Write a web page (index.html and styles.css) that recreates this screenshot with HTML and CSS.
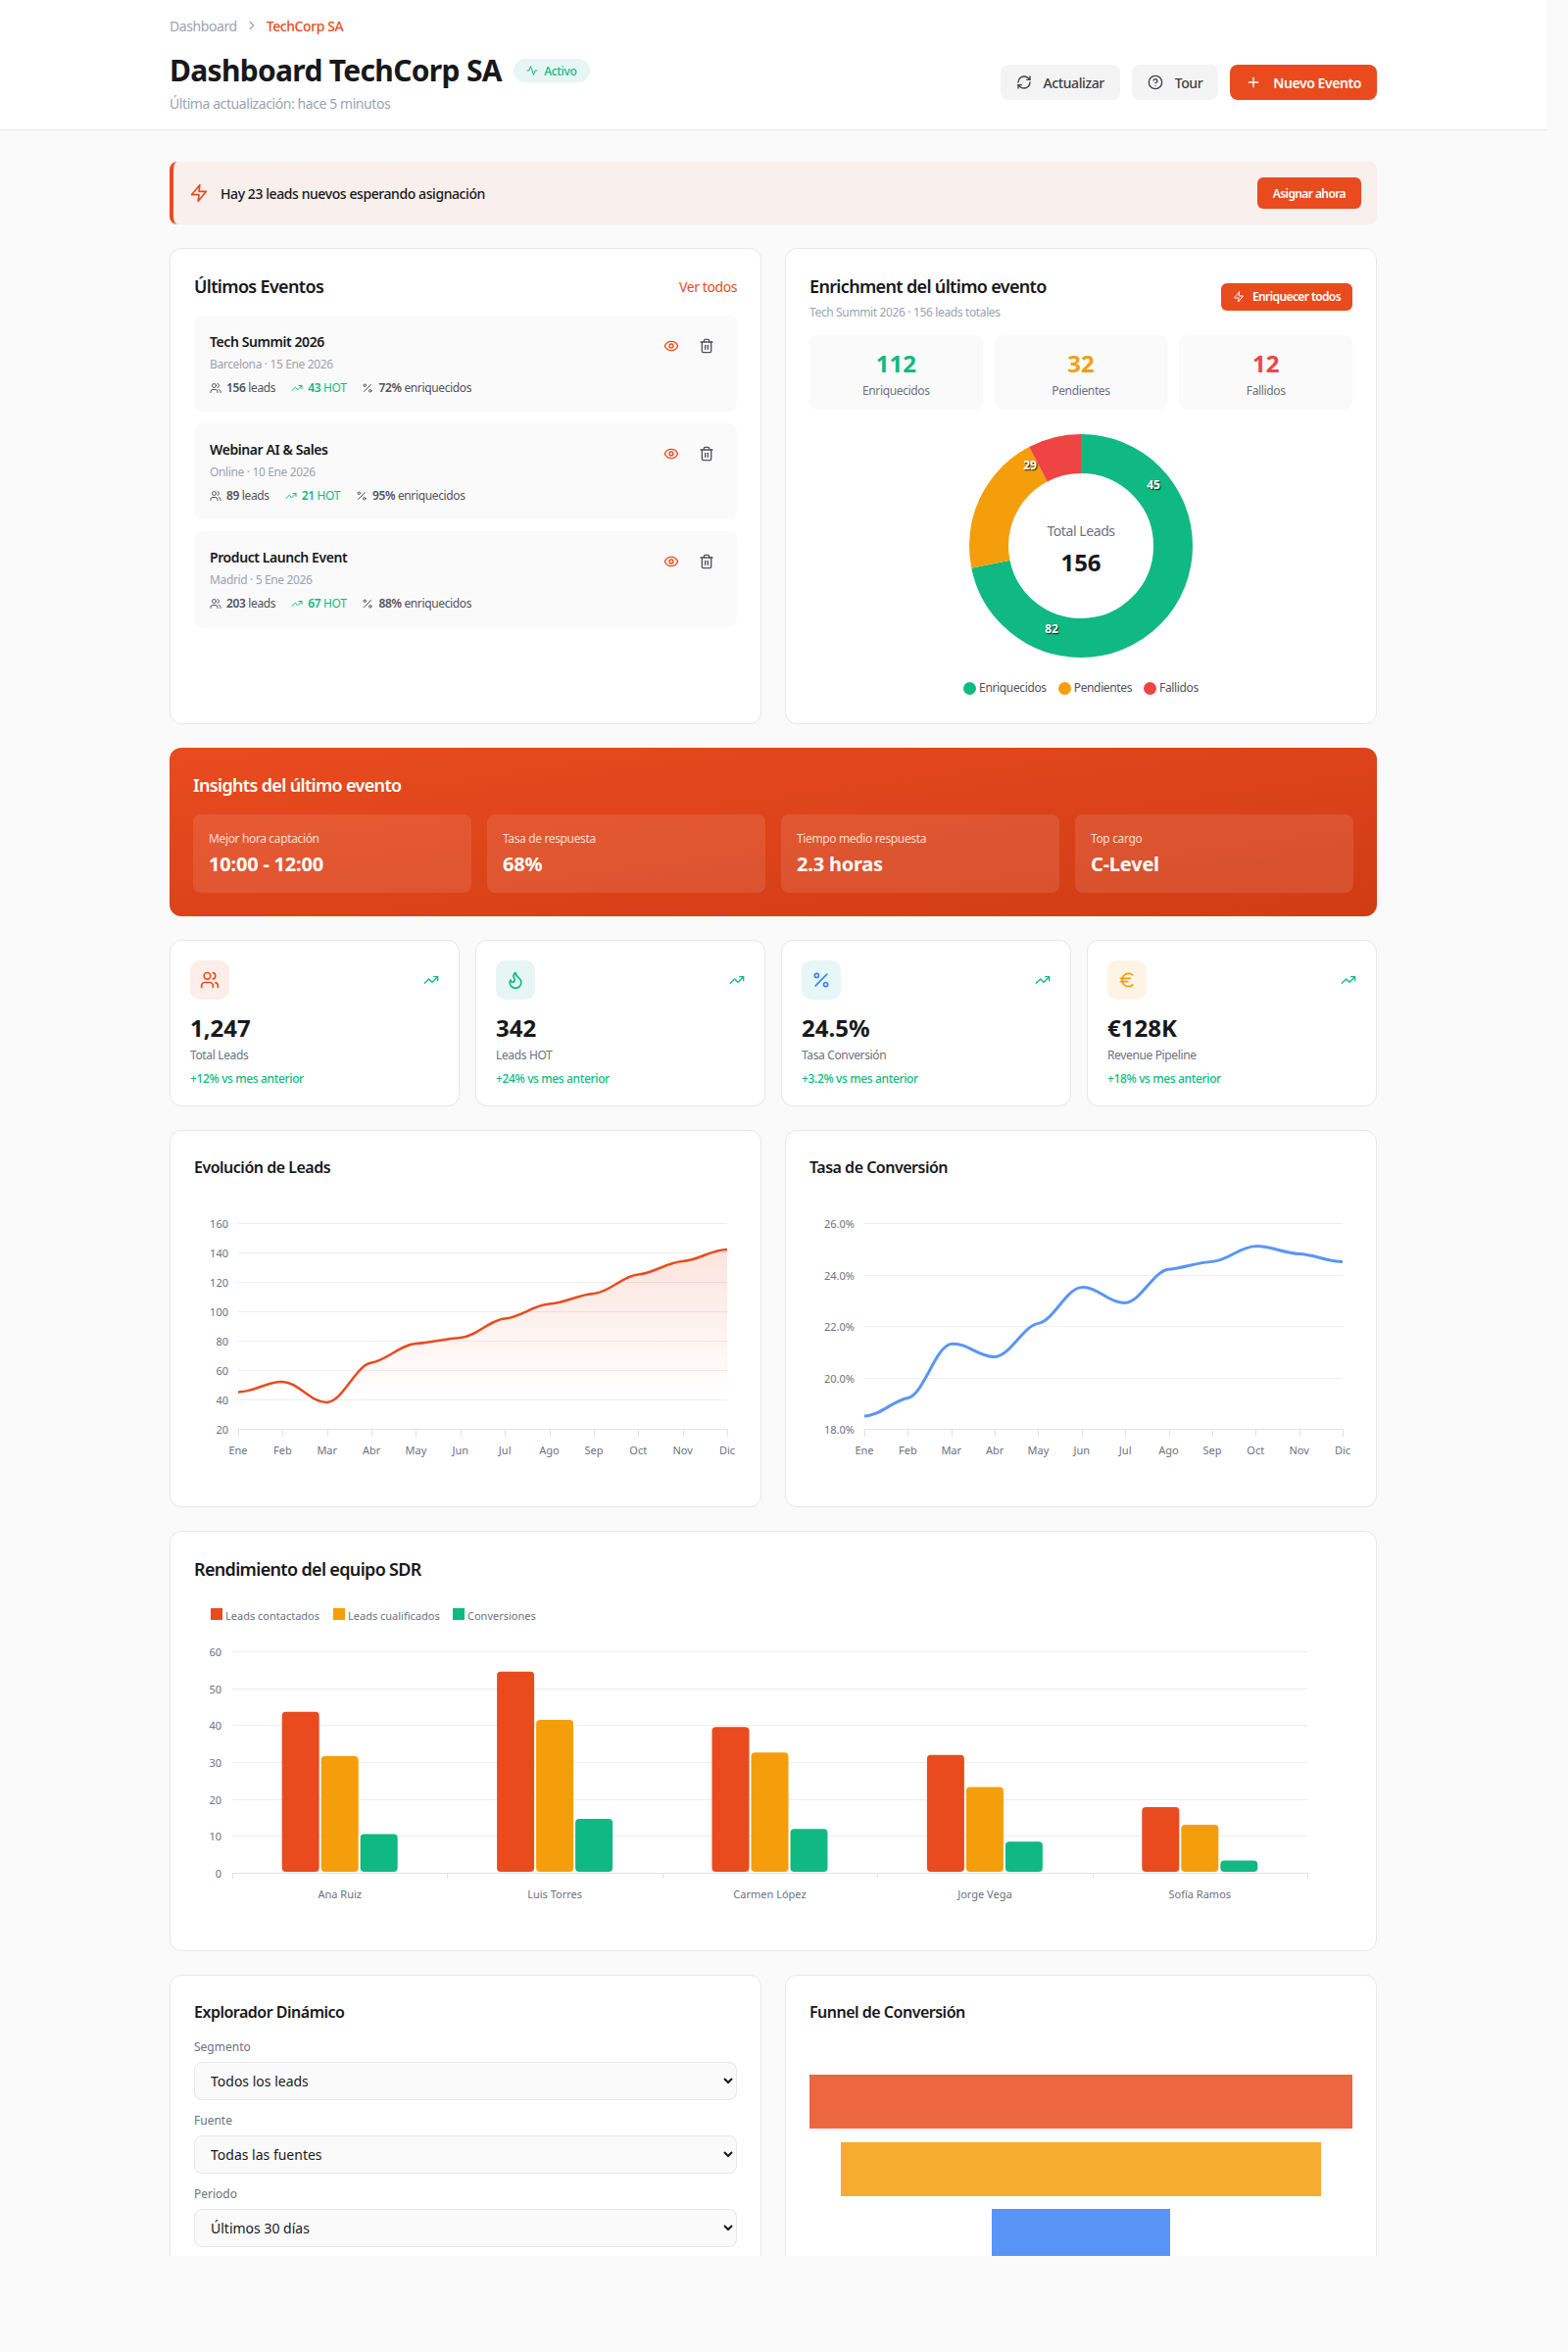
FILE: index.html
```html
<!DOCTYPE html>
<html lang="es">
<head>
  <meta charset="UTF-8" />
  <meta name="viewport" content="width=device-width, initial-scale=1.0"/>
  <title>Dashboard TechCorp SA</title>
  <link rel="stylesheet" href="styles.css">
</head>
<body>
  <svg class="icon-defs" xmlns="http://www.w3.org/2000/svg">
    <symbol id="i-users" viewBox="0 0 24 24"><path d="M16 21v-2a4 4 0 0 0-4-4H6a4 4 0 0 0-4 4v2"/><circle cx="9" cy="7" r="4"/><path d="M22 21v-2a4 4 0 0 0-3-3.87"/><path d="M16 3.13a4 4 0 0 1 0 7.75"/></symbol>
    <symbol id="i-trend" viewBox="0 0 24 24"><polyline points="22 7 13.5 15.5 8.5 10.5 2 17"/><polyline points="16 7 22 7 22 13"/></symbol>
    <symbol id="i-percent" viewBox="0 0 24 24"><line x1="19" x2="5" y1="5" y2="19"/><circle cx="6.5" cy="6.5" r="2.5"/><circle cx="17.5" cy="17.5" r="2.5"/></symbol>
    <symbol id="i-flame" viewBox="0 0 24 24"><path d="M8.5 14.5A2.5 2.5 0 0 0 11 12c0-1.38-.5-2-1-3-1.072-2.143-.224-4.054 2-6 .5 2.5 2 4.9 4 6.5 2 1.6 3 3.5 3 5.5a7 7 0 1 1-14 0c0-1.153.433-2.294 1-3a2.5 2.5 0 0 0 2.5 2.5z"/></symbol>
    <symbol id="i-euro" viewBox="0 0 24 24"><path d="M4 10h12"/><path d="M4 14h9"/><path d="M19 6a7.7 7.7 0 0 0-5.2-2A7.9 7.9 0 0 0 6 12c0 4.4 3.5 8 7.8 8 2 0 3.8-.8 5.2-2"/></symbol>
    <symbol id="i-eye" viewBox="0 0 24 24"><path d="M2 12s3-7 10-7 10 7 10 7-3 7-10 7-10-7-10-7Z"/><circle cx="12" cy="12" r="3"/></symbol>
    <symbol id="i-trash" viewBox="0 0 24 24"><path d="M3 6h18"/><path d="M19 6v14c0 1-1 2-2 2H7c-1 0-2-1-2-2V6"/><path d="M8 6V4c0-1 1-2 2-2h4c1 0 2 1 2 2v2"/><line x1="10" x2="10" y1="11" y2="17"/><line x1="14" x2="14" y1="11" y2="17"/></symbol>
    <symbol id="i-refresh" viewBox="0 0 24 24"><path d="M3 12a9 9 0 0 1 9-9 9.75 9.75 0 0 1 6.74 2.74L21 8"/><path d="M21 3v5h-5"/><path d="M21 12a9 9 0 0 1-9 9 9.75 9.75 0 0 1-6.74-2.74L3 16"/><path d="M8 16H3v5"/></symbol>
    <symbol id="i-help" viewBox="0 0 24 24"><circle cx="12" cy="12" r="10"/><path d="M9.09 9a3 3 0 0 1 5.83 1c0 2-3 3-3 3"/><path d="M12 17h.01"/></symbol>
    <symbol id="i-plus" viewBox="0 0 24 24"><path d="M5 12h14"/><path d="M12 5v14"/></symbol>
    <symbol id="i-zap" viewBox="0 0 24 24"><polygon points="13 2 3 14 12 14 11 22 21 10 12 10 13 2"/></symbol>
    <symbol id="i-activity" viewBox="0 0 24 24"><polyline points="22 12 18 12 15 21 9 3 6 12 2 12"/></symbol>
    <symbol id="i-chevron" viewBox="0 0 24 24"><path d="m9 18 6-6-6-6"/></symbol>
  </svg>

  <div class="viewport">
    <header class="page-header">
      <div class="header-inner">
        <nav class="breadcrumb">
          <span>Dashboard</span>
          <svg class="icon icon-14"><use href="#i-chevron"/></svg>
          <span class="breadcrumb-current">TechCorp SA</span>
        </nav>
        <div class="header-row">
          <div>
            <div class="title-row">
              <h1>Dashboard TechCorp SA</h1>
              <span class="badge"><svg class="icon icon-12"><use href="#i-activity"/></svg>Activo</span>
            </div>
            <p class="updated">Última actualización: hace 5 minutos</p>
          </div>
          <div class="header-actions">
            <button class="btn btn-soft"><svg class="icon icon-16"><use href="#i-refresh"/></svg>Actualizar</button>
            <button class="btn btn-soft"><svg class="icon icon-16"><use href="#i-help"/></svg>Tour</button>
            <button class="btn btn-primary"><svg class="icon icon-16"><use href="#i-plus"/></svg>Nuevo Evento</button>
          </div>
        </div>
      </div>
    </header>

    <main class="content">
      <div class="alert">
        <div class="alert-text"><svg class="icon icon-20 c-brand"><use href="#i-zap"/></svg>Hay 23 leads nuevos esperando asignación</div>
        <button class="btn-small">Asignar ahora</button>
      </div>

      <section class="grid-2">
        <div class="card">
          <div class="card-head">
            <h2>Últimos Eventos</h2>
            <a class="link">Ver todos</a>
          </div>
          <div class="event">
            <div>
              <h3>Tech Summit 2026</h3>
              <p class="event-place">Barcelona · 15 Ene 2026</p>
              <div class="event-stats">
                <span><svg class="icon icon-12"><use href="#i-users"/></svg><b>156</b> leads</span>
                <span class="c-green"><svg class="icon icon-12"><use href="#i-trend"/></svg><b>43</b> HOT</span>
                <span><svg class="icon icon-12"><use href="#i-percent"/></svg><b>72%</b> enriquecidos</span>
              </div>
            </div>
            <div class="event-actions">
              <svg class="icon icon-16 c-brand"><use href="#i-eye"/></svg>
              <svg class="icon icon-16 c-grey"><use href="#i-trash"/></svg>
            </div>
          </div>
          <div class="event">
            <div>
              <h3>Webinar AI &amp; Sales</h3>
              <p class="event-place">Online · 10 Ene 2026</p>
              <div class="event-stats">
                <span><svg class="icon icon-12"><use href="#i-users"/></svg><b>89</b> leads</span>
                <span class="c-green"><svg class="icon icon-12"><use href="#i-trend"/></svg><b>21</b> HOT</span>
                <span><svg class="icon icon-12"><use href="#i-percent"/></svg><b>95%</b> enriquecidos</span>
              </div>
            </div>
            <div class="event-actions">
              <svg class="icon icon-16 c-brand"><use href="#i-eye"/></svg>
              <svg class="icon icon-16 c-grey"><use href="#i-trash"/></svg>
            </div>
          </div>
          <div class="event">
            <div>
              <h3>Product Launch Event</h3>
              <p class="event-place">Madrid · 5 Ene 2026</p>
              <div class="event-stats">
                <span><svg class="icon icon-12"><use href="#i-users"/></svg><b>203</b> leads</span>
                <span class="c-green"><svg class="icon icon-12"><use href="#i-trend"/></svg><b>67</b> HOT</span>
                <span><svg class="icon icon-12"><use href="#i-percent"/></svg><b>88%</b> enriquecidos</span>
              </div>
            </div>
            <div class="event-actions">
              <svg class="icon icon-16 c-brand"><use href="#i-eye"/></svg>
              <svg class="icon icon-16 c-grey"><use href="#i-trash"/></svg>
            </div>
          </div>
        </div>

        <div class="card card-enrich">
          <div class="card-head enrich-head">
            <div>
              <h2>Enrichment del último evento</h2>
              <p class="card-sub">Tech Summit 2026 · 156 leads totales</p>
            </div>
            <button class="btn-small btn-enrich"><svg class="icon icon-12"><use href="#i-zap"/></svg>Enriquecer todos</button>
          </div>
          <div class="enrich-stats">
            <div class="enrich-box"><strong class="c-green">112</strong><span>Enriquecidos</span></div>
            <div class="enrich-box"><strong class="c-amber">32</strong><span>Pendientes</span></div>
            <div class="enrich-box"><strong class="c-red">12</strong><span>Fallidos</span></div>
          </div>
          <div class="donut">
            <svg class="donut-ring" viewBox="0 0 228 228" width="228" height="228">
              <circle cx="114" cy="114" r="94" pathLength="156" stroke="#10b981" stroke-dasharray="112 44"/>
              <circle cx="114" cy="114" r="94" pathLength="156" stroke="#f59e0b" stroke-dasharray="32 124" stroke-dashoffset="-112"/>
              <circle cx="114" cy="114" r="94" pathLength="156" stroke="#ef4444" stroke-dasharray="12 144" stroke-dashoffset="-144"/>
            </svg>
            <span class="donut-label label-45">45</span>
            <span class="donut-label label-82">82</span>
            <span class="donut-label label-29">29</span>
            <div class="donut-center"><span>Total Leads</span><strong>156</strong></div>
          </div>
          <div class="donut-legend">
            <span><i class="dot bg-green"></i>Enriquecidos</span>
            <span><i class="dot bg-amber"></i>Pendientes</span>
            <span><i class="dot bg-red"></i>Fallidos</span>
          </div>
        </div>
      </section>

      <section class="insights">
        <h2>Insights del último evento</h2>
        <div class="insight-grid">
          <div class="insight"><span>Mejor hora captación</span><strong>10:00 - 12:00</strong></div>
          <div class="insight"><span>Tasa de respuesta</span><strong>68%</strong></div>
          <div class="insight"><span>Tiempo medio respuesta</span><strong>2.3 horas</strong></div>
          <div class="insight"><span>Top cargo</span><strong>C-Level</strong></div>
        </div>
      </section>

      <section class="kpi-grid">
        <div class="kpi">
          <div class="kpi-top">
            <div class="kpi-icon tint-brand"><svg class="icon icon-20"><use href="#i-users"/></svg></div>
            <svg class="icon icon-16 c-green"><use href="#i-trend"/></svg>
          </div>
          <div class="kpi-value">1,247</div>
          <div class="kpi-label">Total Leads</div>
          <div class="kpi-delta">+12% vs mes anterior</div>
        </div>
        <div class="kpi">
          <div class="kpi-top">
            <div class="kpi-icon tint-green"><svg class="icon icon-20"><use href="#i-flame"/></svg></div>
            <svg class="icon icon-16 c-green"><use href="#i-trend"/></svg>
          </div>
          <div class="kpi-value">342</div>
          <div class="kpi-label">Leads HOT</div>
          <div class="kpi-delta">+24% vs mes anterior</div>
        </div>
        <div class="kpi">
          <div class="kpi-top">
            <div class="kpi-icon tint-blue"><svg class="icon icon-20"><use href="#i-percent"/></svg></div>
            <svg class="icon icon-16 c-green"><use href="#i-trend"/></svg>
          </div>
          <div class="kpi-value">24.5%</div>
          <div class="kpi-label">Tasa Conversión</div>
          <div class="kpi-delta">+3.2% vs mes anterior</div>
        </div>
        <div class="kpi">
          <div class="kpi-top">
            <div class="kpi-icon tint-amber"><svg class="icon icon-20"><use href="#i-euro"/></svg></div>
            <svg class="icon icon-16 c-green"><use href="#i-trend"/></svg>
          </div>
          <div class="kpi-value">€128K</div>
          <div class="kpi-label">Revenue Pipeline</div>
          <div class="kpi-delta">+18% vs mes anterior</div>
        </div>
      </section>

      <section class="grid-2">
        <div class="card">
          <h2 class="chart-title">Evolución de Leads</h2>
          <svg id="leads-chart" class="chart" width="554" height="293"></svg>
        </div>
        <div class="card">
          <h2 class="chart-title">Tasa de Conversión</h2>
          <svg id="rate-chart" class="chart" width="554" height="293"></svg>
        </div>
      </section>

      <section class="card card-wide">
        <div class="card-title-only"><h2>Rendimiento del equipo SDR</h2></div>
        <svg id="sdr-chart" class="chart" width="1182" height="335"></svg>
      </section>

      <section class="grid-2">
        <div class="card">
          <h2 class="chart-title title-tight">Explorador Dinámico</h2>
          <div class="field">
            <label>Segmento</label>
            <select><option>Todos los leads</option><option>Leads HOT</option></select>
          </div>
          <div class="field">
            <label>Fuente</label>
            <select><option>Todas las fuentes</option><option>Eventos</option></select>
          </div>
          <div class="field">
            <label>Periodo</label>
            <select><option>Últimos 30 días</option><option>Últimos 90 días</option></select>
          </div>
        </div>
        <div class="card">
          <h2 class="chart-title">Funnel de Conversión</h2>
          <div class="funnel">
            <div class="funnel-bar bg-brand" style="width: 100%"></div>
            <div class="funnel-bar bg-amber" style="width: 88.3%"></div>
            <div class="funnel-bar bg-blue" style="width: 33%"></div>
          </div>
        </div>
      </section>
    </main>
  </div>

  <script src="script.js"></script>
</body>
</html>
```

FILE: styles.css
```css
* {
  box-sizing: border-box;
  letter-spacing: -0.03em;
}

body {
  margin: 0;
  background: #fafafa;
  color: #18181b;
  font-family: "Noto Sans", "Open Sans", sans-serif;
}

h1, h2, h3, p {
  margin: 0;
}

.icon-defs {
  display: none;
}

.viewport {
  width: 1578px;
  height: 2302px;
  overflow: hidden;
}

/* icons */
.icon {
  flex: none;
  fill: none;
  stroke: currentColor;
  stroke-width: 2;
  stroke-linecap: round;
  stroke-linejoin: round;
}

.icon-12 { width: 12px; height: 12px; }
.icon-14 { width: 14px; height: 14px; }
.icon-16 { width: 16px; height: 16px; }
.icon-20 { width: 20px; height: 20px; }

.c-brand { color: #e94b1f; }
.c-green { color: #10b981; }
.c-amber { color: #f59e0b; }
.c-red { color: #ef4444; }
.c-grey { color: #52525b; }

.bg-brand { background: #e94b1f; }
.bg-green { background: #10b981; }
.bg-amber { background: #f59e0b; }
.bg-red { background: #ef4444; }
.bg-blue { background: #3b82f6; }

/* header */
.page-header {
  background: #fff;
  border-bottom: 1px solid #e5e7eb;
}

.header-inner {
  max-width: 1280px;
  margin: 0 auto;
  padding: 16px 24px;
}

.breadcrumb {
  display: flex;
  align-items: center;
  gap: 8px;
  height: 20px;
  font-size: 14px;
  color: #9ca3af;
  margin-bottom: 16px;
}

.breadcrumb-current {
  color: #e94b1f;
  font-weight: 500;
}

.header-row {
  display: flex;
  justify-content: space-between;
  align-items: center;
}

.title-row {
  display: flex;
  align-items: center;
  gap: 12px;
}

h1 {
  font-size: 30px;
  line-height: 40px;
  font-weight: 700;
  letter-spacing: -0.023em;
}

.badge {
  display: inline-flex;
  align-items: center;
  justify-content: center;
  gap: 6px;
  width: 78px;
  height: 24px;
  border-radius: 12px;
  background: #e7f6f3;
  color: #10b981;
  font-size: 12px;
  font-weight: 500;
}

.updated {
  font-size: 14px;
  line-height: 20px;
  color: #9ca3af;
  margin-top: 4px;
}

.header-actions {
  display: flex;
  gap: 12px;
}

.btn {
  display: inline-flex;
  align-items: center;
  gap: 12px;
  height: 36px;
  padding: 0 16px;
  border: 0;
  border-radius: 8px;
  font-family: inherit;
  font-size: 14px;
  font-weight: 500;
}

.btn-soft {
  background: #f4f4f5;
  color: #3f3f46;
}

.btn-primary {
  background: #e94b1f;
  color: #fff;
  font-weight: 600;
}

.btn-small {
  display: inline-flex;
  align-items: center;
  gap: 8px;
  height: 32px;
  padding: 0 16px;
  border: 0;
  border-radius: 6px;
  background: #e94b1f;
  color: #fff;
  font-family: inherit;
  font-size: 12px;
  font-weight: 600;
  letter-spacing: -0.05em;
}

/* main */
.content {
  max-width: 1280px;
  margin: 0 auto;
  padding: 32px 24px;
}

.alert {
  display: flex;
  align-items: center;
  justify-content: space-between;
  height: 64px;
  padding: 0 16px;
  background: #f9efec;
  border-left: 4px solid #e94b1f;
  border-radius: 8px;
  margin-bottom: 24px;
}

.alert-text {
  display: flex;
  align-items: center;
  gap: 12px;
  font-size: 14px;
  font-weight: 500;
}

.grid-2 {
  display: grid;
  grid-template-columns: 1fr 1fr;
  gap: 24px;
  margin-bottom: 24px;
}

.card {
  background: #fff;
  border: 1px solid #e5e7eb;
  border-radius: 12px;
  padding: 24px;
}

.card-enrich {
  min-height: 486px;
}

.card-head {
  display: flex;
  align-items: center;
  justify-content: space-between;
  margin-bottom: 16px;
}

.card h2 {
  font-size: 18px;
  line-height: 28px;
  font-weight: 600;
  letter-spacing: -0.037em;
}

.link {
  font-size: 14px;
  color: #e94b1f;
}

.event {
  display: flex;
  justify-content: space-between;
  padding: 16px;
  background: #fafafa;
  border-radius: 8px;
  margin-bottom: 12px;
}

.event h3 {
  font-size: 14px;
  line-height: 22px;
  font-weight: 600;
}

.event-place {
  font-size: 12px;
  line-height: 16px;
  color: #9ca3af;
  margin-top: 4px;
}

.event-stats {
  display: flex;
  gap: 16px;
  font-size: 12px;
  line-height: 16px;
  margin-top: 8px;
  color: #52525b;
}

.event-stats .icon {
  margin-right: 5px;
  vertical-align: -2px;
}

.event-stats .c-green {
  color: #10b981;
}

.event-stats b {
  font-weight: 600;
}

.event-actions {
  display: flex;
  gap: 20px;
  padding: 7px 7px 0 0;
}

.enrich-head {
  margin-bottom: 15px;
}

.card-sub {
  font-size: 12px;
  line-height: 16px;
  color: #9ca3af;
  margin-top: 5px;
}

.btn-enrich {
  height: 28px;
  padding: 0 12px;
}

.enrich-stats {
  display: grid;
  grid-template-columns: repeat(3, 1fr);
  gap: 12px;
}

.enrich-box {
  display: flex;
  flex-direction: column;
  align-items: center;
  gap: 4px;
  padding: 13px 12px 11px;
  background: #fafafa;
  border-radius: 8px;
}

.enrich-box strong {
  font-size: 24px;
  line-height: 32px;
  font-weight: 700;
  letter-spacing: 0;
}

.enrich-box span {
  font-size: 12px;
  line-height: 16px;
  color: #6b7280;
}

.donut {
  position: relative;
  width: 228px;
  height: 228px;
  margin: 25px auto 0;
}

.donut-ring {
  display: block;
  transform: rotate(-90deg);
}

.donut-ring circle {
  fill: none;
  stroke-width: 40;
}

.donut-label {
  position: absolute;
  transform: translate(-50%, -50%);
  color: #fff;
  font-size: 12px;
  font-weight: 700;
  letter-spacing: 0;
  text-shadow: 1px 1px 0 rgba(0, 0, 0, 0.55), 1px 1px 2px rgba(0, 0, 0, 0.4);
}

.label-45 { left: 188px; top: 51px; }
.label-82 { left: 84px; top: 198px; }
.label-29 { left: 62px; top: 31px; }

.donut-center {
  position: absolute;
  inset: 0;
  display: flex;
  flex-direction: column;
  align-items: center;
  justify-content: center;
  padding-top: 8px;
}

.donut-center span {
  font-size: 14px;
  line-height: 20px;
  color: #6b7280;
}

.donut-center strong {
  font-size: 24px;
  line-height: 32px;
  font-weight: 700;
  letter-spacing: 0;
  margin-top: 6px;
}

.donut-legend {
  display: flex;
  justify-content: center;
  gap: 12px;
  margin-top: 23px;
  font-size: 12px;
  line-height: 16px;
  color: #52525b;
}

.donut-legend span {
  display: flex;
  align-items: center;
  gap: 3px;
}

.dot {
  width: 13px;
  height: 13px;
  border-radius: 50%;
}

/* insights */
.insights {
  padding: 24px;
  border-radius: 12px;
  background: linear-gradient(to bottom right, #e94b1f, #d03c15);
  color: #fff;
  margin-bottom: 24px;
}

.insights h2 {
  font-size: 18px;
  line-height: 28px;
  font-weight: 600;
  letter-spacing: -0.037em;
  margin-bottom: 16px;
}

.insight-grid {
  display: grid;
  grid-template-columns: repeat(4, 1fr);
  gap: 16px;
}

.insight {
  display: flex;
  flex-direction: column;
  gap: 5px;
  padding: 16px 16px 17px;
  background: rgba(255, 255, 255, 0.1);
  border-radius: 8px;
}

.insight span {
  font-size: 12px;
  line-height: 18px;
  color: rgba(255, 255, 255, 0.8);
}

.insight strong {
  font-size: 20px;
  line-height: 24px;
  font-weight: 700;
  letter-spacing: -0.01em;
}

/* kpis */
.kpi-grid {
  display: grid;
  grid-template-columns: repeat(4, 1fr);
  gap: 16px;
  margin-bottom: 24px;
}

.kpi {
  height: 170px;
  padding: 20px;
  background: #fff;
  border: 1px solid #e5e7eb;
  border-radius: 12px;
}

.kpi-top {
  display: flex;
  align-items: center;
  justify-content: space-between;
  margin-bottom: 12px;
}

.kpi-icon {
  display: flex;
  align-items: center;
  justify-content: center;
  width: 40px;
  height: 40px;
  border-radius: 10px;
}

.tint-brand { background: #fdeee9; color: #e94b1f; }
.tint-green { background: #e7f6f3; color: #10b981; }
.tint-blue { background: #e7f6f6; color: #3b82f6; }
.tint-amber { background: #fef4e6; color: #f59e0b; }

.kpi-value {
  font-size: 24px;
  line-height: 34px;
  font-weight: 700;
  letter-spacing: 0;
}

.kpi-label {
  font-size: 12px;
  line-height: 16px;
  color: #6b7280;
  margin-top: 3px;
}

.kpi-delta {
  font-size: 12px;
  line-height: 16px;
  color: #10b981;
  font-weight: 500;
  margin-top: 8px;
}

/* charts */
.chart {
  display: block;
}

.chart text {
  font-family: "Noto Sans", "Open Sans", sans-serif;
  font-size: 11px;
  letter-spacing: 0;
  fill: #6b7280;
}

.card .chart-title {
  font-size: 16px;
  line-height: 26px;
  letter-spacing: -0.031em;
  margin-bottom: 16px;
}

.card .title-tight {
  margin-bottom: 15px;
}

.card-wide {
  margin-bottom: 24px;
}

.card-title-only {
  margin-bottom: 16px;
}

/* explorer */
.field {
  margin-bottom: 13px;
}

.field label {
  display: block;
  font-size: 12px;
  line-height: 16px;
  letter-spacing: 0;
  color: #6b7280;
  margin-bottom: 7px;
}

.field select {
  display: block;
  width: 100%;
  height: 39px;
  padding: 0 12px;
  background: #fafafa;
  border: 1px solid #e5e7eb;
  border-radius: 8px;
  font-family: inherit;
  font-size: 14px;
  letter-spacing: 0;
  color: #18181b;
}

/* funnel */
.funnel {
  display: flex;
  flex-direction: column;
  align-items: center;
  gap: 13.6px;
  padding-top: 35px;
}

.funnel-bar {
  height: 55px;
  opacity: 0.85;
}
```

FILE: script.js
```js
const SVG_NS = 'http://www.w3.org/2000/svg';
const MONTHS = ['Ene', 'Feb', 'Mar', 'Abr', 'May', 'Jun', 'Jul', 'Ago', 'Sep', 'Oct', 'Nov', 'Dic'];
const GRID = '#eeeeee';
const AXIS = '#e2e2e2';

const add = (parent, tag, attrs, text) => {
  const node = document.createElementNS(SVG_NS, tag);
  Object.keys(attrs).forEach(key => node.setAttribute(key, attrs[key]));
  if (text !== undefined) node.textContent = text;
  parent.appendChild(node);
  return node;
};

const label = (svg, x, y, anchor, text) => {
  add(svg, 'text', { x, y, 'text-anchor': anchor, 'dominant-baseline': 'central' }, text);
};

// flattened tangents at each point, so the line has a small shoulder there
const smoothPath = (points) => {
  const slopes = points.map((p, i) => {
    if (i === 0 || i === points.length - 1) return 0;
    const prev = points[i - 1];
    const next = points[i + 1];
    return 0.23 * (next.y - prev.y) / (next.x - prev.x);
  });
  let d = `M${points[0].x} ${points[0].y}`;
  for (let i = 1; i < points.length; i++) {
    const a = points[i - 1];
    const b = points[i];
    const handle = (b.x - a.x) * 0.36;
    d += `C${a.x + handle} ${a.y + slopes[i - 1] * handle} ${b.x - handle} ${b.y - slopes[i] * handle} ${b.x} ${b.y}`;
  }
  return d;
};

const drawLineChart = (id, opts) => {
  const svg = document.getElementById(id);
  const { left, right, top, bottom, min, max, step } = opts;
  const toY = v => bottom - (v - min) / (max - min) * (bottom - top);
  const toX = i => left + i * (right - left) / (MONTHS.length - 1);

  for (let v = min; v <= max; v += step) {
    const y = Math.round(toY(v)) + 0.5;
    add(svg, 'line', { x1: left, x2: right, y1: y, y2: y, stroke: v === min ? AXIS : GRID });
    label(svg, left - 10, y, 'end', opts.format(v));
  }
  MONTHS.forEach((m, i) => {
    const x = Math.round(toX(i)) + 0.5;
    add(svg, 'line', { x1: x, x2: x, y1: bottom, y2: bottom + 8, stroke: AXIS });
    label(svg, toX(i), bottom + 21, 'middle', m);
  });

  const points = opts.data.map((v, i) => ({ x: toX(i), y: toY(v) }));
  const curve = smoothPath(points);

  if (opts.fill) {
    const defs = add(svg, 'defs', {});
    const grad = add(defs, 'linearGradient', {
      id: id + '-fill', gradientUnits: 'userSpaceOnUse', x1: 0, x2: 0, y1: 40, y2: 205
    });
    add(grad, 'stop', { offset: 0, 'stop-color': opts.color, 'stop-opacity': 0.17 });
    add(grad, 'stop', { offset: 1, 'stop-color': opts.color, 'stop-opacity': 0 });
    add(svg, 'path', { d: `${curve}L${right} ${bottom}L${left} ${bottom}Z`, fill: `url(#${id}-fill)` });
  }
  add(svg, 'path', { d: curve, fill: 'none', stroke: opts.color, 'stroke-width': opts.width });
};

const drawBarChart = (id, opts) => {
  const svg = document.getElementById(id);
  const { left, right, top, bottom, max, step, series, names } = opts;
  const toY = v => bottom - v / max * (bottom - top);
  const band = (right - left) / names.length;

  let legendX = 17;
  series.forEach(s => {
    add(svg, 'rect', { x: legendX, y: 10, width: 12, height: 12, fill: s.color });
    label(svg, legendX + 15, 17, 'start', s.name);
    legendX += s.legendStep;
  });

  for (let v = 0; v <= max; v += step) {
    const y = Math.round(toY(v)) + 0.5;
    add(svg, 'line', { x1: left, x2: right, y1: y, y2: y, stroke: v === 0 ? AXIS : GRID });
    label(svg, left - 11, y, 'end', v);
  }
  for (let i = 0; i <= names.length; i++) {
    const x = Math.round(left + i * band) + 0.5;
    add(svg, 'line', { x1: x, x2: x, y1: bottom, y2: bottom + 6, stroke: AXIS });
  }

  names.forEach((name, i) => {
    const center = left + band * (i + 0.5);
    label(svg, center, bottom + 21, 'middle', name);
    series.forEach((s, j) => {
      const y = toY(s.data[i]);
      add(svg, 'rect', {
        x: center - 59 + j * 40, y, width: 38, height: bottom - 1 - y, rx: 4, fill: s.color
      });
    });
  });
};

drawLineChart('leads-chart', {
  left: 45, right: 544, top: 28, bottom: 238, min: 20, max: 160, step: 20,
  data: [45, 52, 38, 65, 78, 82, 95, 105, 112, 125, 134, 142],
  color: '#e94b1f', width: 2.5, fill: true, format: v => v
});

drawLineChart('rate-chart', {
  left: 56, right: 544, top: 28, bottom: 238, min: 18, max: 26, step: 2,
  data: [18.5, 19.2, 21.3, 20.8, 22.1, 23.5, 22.9, 24.2, 24.5, 25.1, 24.8, 24.5],
  color: '#5995f7', width: 3, format: v => v.toFixed(1) + '%'
});

drawBarChart('sdr-chart', {
  left: 39, right: 1136, top: 54, bottom: 280, max: 60, step: 10,
  names: ['Ana Ruiz', 'Luis Torres', 'Carmen López', 'Jorge Vega', 'Sofía Ramos'],
  series: [
    { name: 'Leads contactados', color: '#e94b1f', legendStep: 125, data: [43.6, 54.5, 39.5, 31.9, 17.8] },
    { name: 'Leads cualificados', color: '#f59e0b', legendStep: 122, data: [31.6, 41.4, 32.6, 23.2, 13] },
    { name: 'Conversiones', color: '#10b981', legendStep: 100, data: [10.5, 14.6, 11.9, 8.4, 3.3] }
  ]
});
```
